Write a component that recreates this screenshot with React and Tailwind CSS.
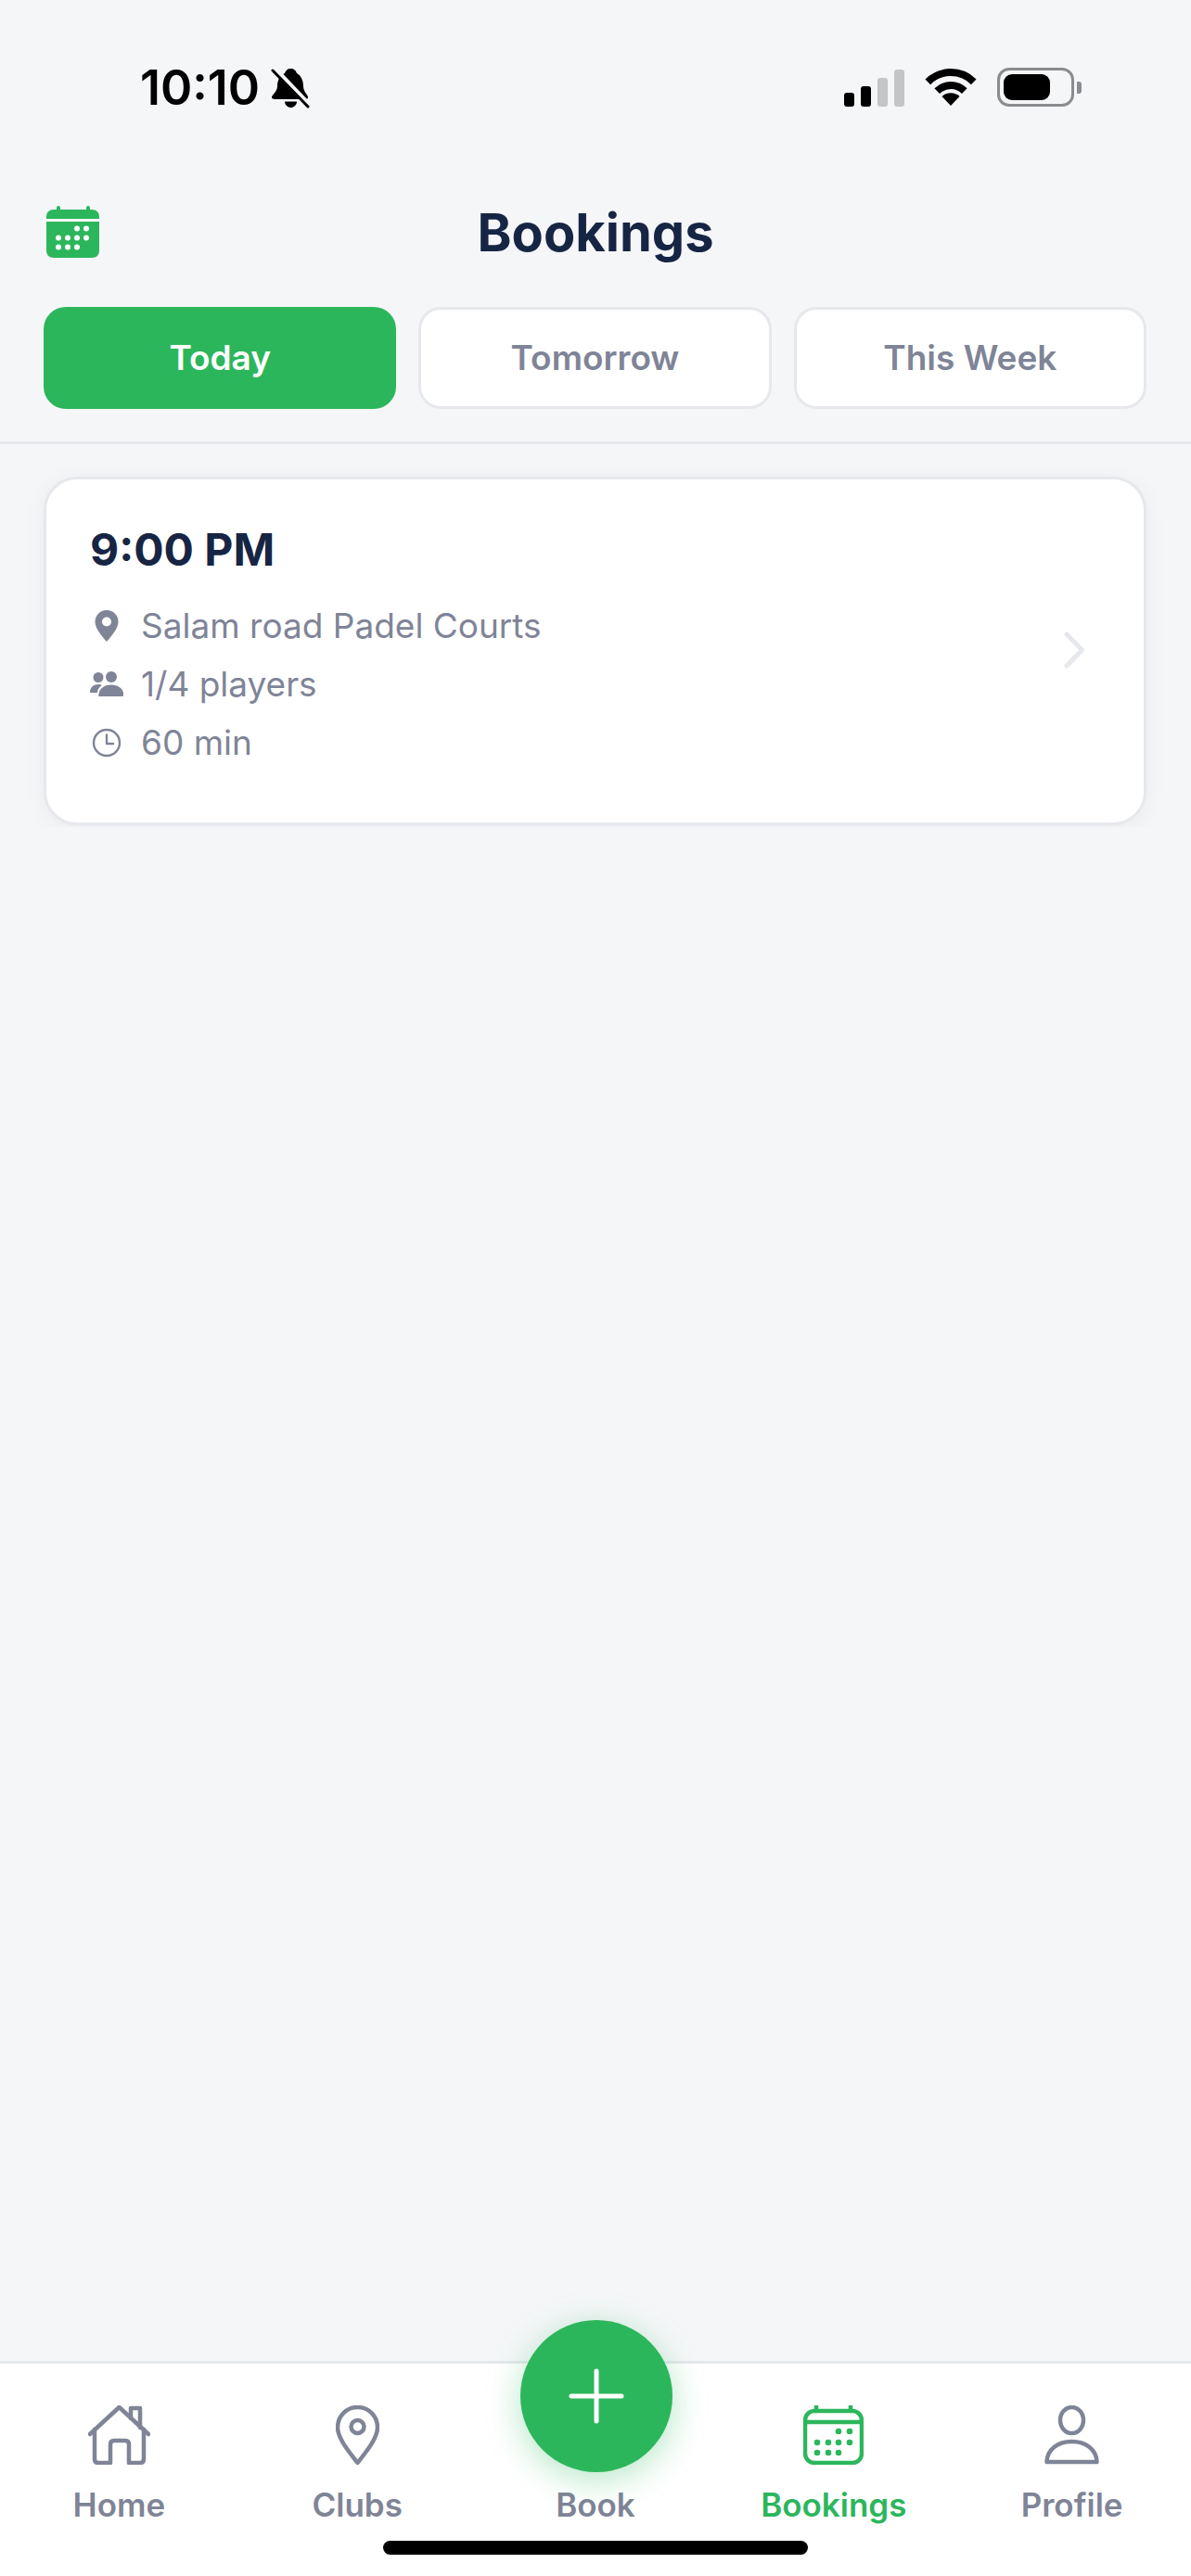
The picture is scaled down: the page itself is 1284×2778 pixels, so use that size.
const GREEN = "#2CB65C";

function BellSlash() {
  return (
    <svg width="42" height="44" viewBox="0 0 42 44" className="ml-[12px]">
      <path fill="#000" d="M21 1C25 1 27 3 28 6C33 9 35 14 35 20C35 26 40 29 40 32C40 34 38 34 37 34H5C2 34 1 33 1 32C1 29 7 26 7 20C7 13 10 8 15 6C16 3 18 1 21 1Z" />
      <path fill="#000" d="M15 36.5H28C28 40 25 43 21.500 43C18 43 15 40 15 36.500Z" />
      <path stroke="#F5F6F8" strokeWidth="4" d="M4 0L42 40" />
      <path stroke="#000" strokeWidth="3" strokeLinecap="round" d="M2 3L40 42" />
    </svg>
  );
}

function Wifi() {
  return (
    <svg width="56" height="41" viewBox="0 0 56 41">
      <g fill="none" stroke="#000" strokeWidth="8">
        <path d="M3.300 14.300A35 35 0 0 1 52.700 14.300" />
        <path d="M13.200 24.200A21 21 0 0 1 42.800 24.200" />
      </g>
      <path fill="#000" d="M28 40L18.500 30A14 14 0 0 1 37.500 30Z" />
    </svg>
  );
}

function CalendarFilled() {
  const dots = [
    [43, 24.500], [33, 24.500],
    [13, 34.500], [23, 34.500], [33, 34.500], [43, 34.500],
    [13, 44.500], [23, 44.500], [33, 44.500],
  ];
  return (
    <svg width="57" height="57" viewBox="0 0 57 57">
      <rect x="11" y="0" width="4" height="7" rx="2" fill={GREEN} />
      <rect x="43" y="0" width="4" height="7" rx="2" fill={GREEN} />
      <path fill={GREEN} d="M0 14V12C0 7 3 4 8 4H49C54 4 57 7 57 12V14Z" />
      <path fill={GREEN} d="M0 17H57V48C57 53 54 56 49 56H8C3 56 0 53 0 48Z" />
      {dots.map(([x, y]) => (
        <circle key={`${x}-${y}`} cx={x} cy={y} r="3" fill="#fff" />
      ))}
    </svg>
  );
}

function PinFilled() {
  return (
    <svg width="26" height="34" viewBox="0 0 26 34">
      <path fill="#7F8497" fillRule="evenodd" d="M13 0C20 0 25.500 5.500 25.500 12.500C25.500 20 18 28 13 34C8 28 0.500 20 0.500 12.500C0.500 5.500 6 0 13 0ZM13 7.500A5 5 0 1 0 13 17.500A5 5 0 1 0 13 7.500Z" />
    </svg>
  );
}

function UsersFilled() {
  return (
    <svg width="36" height="27" viewBox="0 0 36 27">
      <circle cx="9" cy="6.500" r="5.500" fill="#7F8497" />
      <circle cx="23" cy="6" r="6" fill="#7F8497" />
      <path fill="#7F8497" d="M0 23C0 17 4 14 9 14C11 14 12 14.500 13 15C10 17 8 19.500 8 23H1Q0 23 0 23Z" />
      <path fill="#7F8497" d="M10 27C9 27 9 25 10 22.500C11 18 16.500 14.500 23 14.500C29.500 14.500 35 18 36 23C36.500 25.500 36 27 35 27Z" />
    </svg>
  );
}

function Clock() {
  return (
    <svg width="32" height="32" viewBox="0 0 32 32" fill="none" stroke="#7F8497" strokeWidth="2.400">
      <circle cx="16" cy="16" r="14" />
      <path d="M16 7.500V17H23" strokeLinecap="round" strokeLinejoin="round" />
    </svg>
  );
}

function HomeIcon() {
  return (
    <svg width="67" height="64" viewBox="0 0 67 64" fill="none" stroke="#7F8497" strokeWidth="4.500" strokeLinecap="round" strokeLinejoin="round">
      <path d="M2 31L33.500 2L65 31" />
      <path d="M46 14V3H56V24" />
      <path d="M7 26V58Q7 62 11 62H24V42Q24 38 28 38H40Q44 38 44 42V62H56Q60 62 60 58V26" />
    </svg>
  );
}

function ClubsIcon() {
  return (
    <svg width="47" height="64" viewBox="0 0 47 64" fill="none" stroke="#7F8497" strokeWidth="4.500" strokeLinejoin="round">
      <path d="M23.500 2C35 2 45 11 45 24C45 36 31 52 23.500 62C16 52 2 36 2 24C2 11 12 2 23.500 2Z" />
      <circle cx="23.500" cy="23" r="7" />
    </svg>
  );
}

function CalendarOutline() {
  const dots = [
    [38, 28], [50, 28],
    [15, 40], [27, 40], [38, 40], [50, 40],
    [15, 51], [27, 51], [38, 51],
  ];
  return (
    <svg width="65" height="64" viewBox="0 0 65 64" fill="none" stroke={GREEN} strokeWidth="4.500">
      <rect x="2" y="6" width="61" height="56" rx="10" />
      <path d="M2 18H63" />
      <path d="M14 0V6M51 0V6" strokeLinecap="round" />
      {dots.map(([x, y]) => (
        <circle key={`${x}-${y}`} cx={x} cy={y} r="3.300" fill={GREEN} stroke="none" />
      ))}
    </svg>
  );
}

function ProfileIcon() {
  return (
    <svg width="59" height="64" viewBox="0 0 59 64" fill="none" stroke="#7F8497" strokeWidth="4.500" strokeLinejoin="round">
      <ellipse cx="29.500" cy="16" rx="12.500" ry="14" />
      <path d="M2.500 61C3 47 15 39 29.500 39C44 39 56 47 56.500 61Z" />
    </svg>
  );
}

function InfoRow({ icon, text }) {
  return (
    <div className="flex h-[63px] items-center">
      <div className="flex w-[55px] items-center justify-start">
        <div className="flex w-[36px] justify-center">{icon}</div>
      </div>
      <span className="text-[37px] leading-[63px] text-[#7F8497]">{text}</span>
    </div>
  );
}

function Tab({ label, active }) {
  return active ? (
    <button className="flex h-[110px] items-center justify-center rounded-[24px] bg-[#2CB65C] text-[37px] font-semibold text-white">
      {label}
    </button>
  ) : (
    <button className="flex h-[110px] items-center justify-center rounded-[24px] border-[3px] border-[#E6E8EC] bg-white text-[37px] font-semibold text-[#7F8497]">
      {label}
    </button>
  );
}

function NavItem({ icon, label, active }) {
  return (
    <div className="flex flex-1 flex-col items-center">
      <div className="flex h-[64px] items-end justify-center">{icon}</div>
      <span className={`mt-[21px] text-[35px] leading-[44px] font-semibold ${active ? "text-[#2CB65C]" : "text-[#7F8497]"}`}>
        {label}
      </span>
    </div>
  );
}

export default function App() {
  return (
    <div className="relative flex h-[2778px] w-[1284px] flex-col overflow-hidden bg-[#F5F6F8] font-['Inter',sans-serif]">
      <div className="h-[72px] shrink-0" />
      <div className="flex h-[44px] shrink-0 items-center justify-between pl-[151px] pr-[118px]">
        <div className="mt-[2px] flex items-center">
          <span className="text-[52px] leading-[44px] font-semibold text-black">10:10</span>
          <BellSlash />
        </div>
        <div className="flex items-center">
          <div className="flex h-[41px] items-end gap-[7px]">
            <div className="h-[15px] w-[11px] rounded-[3px] bg-black" />
            <div className="h-[22px] w-[11px] rounded-[3px] bg-black" />
            <div className="h-[31px] w-[11px] rounded-[3px] bg-[#C4C5C7]" />
            <div className="h-[40px] w-[11px] rounded-[3px] bg-[#C4C5C7]" />
          </div>
          <div className="ml-[22px]"><Wifi /></div>
          <div className="ml-[22px] flex items-center">
            <div className="flex h-[42px] w-[83px] items-center rounded-[13px] border-[3px] border-[#8C8C90] pl-[4px]">
              <div className="h-[28px] w-[50px] rounded-[9px] bg-black" />
            </div>
            <div className="ml-[3px] h-[13px] w-[5px] rounded-r-[3px] bg-[#8C8C90]" />
          </div>
        </div>
      </div>

      <header className="flex h-[363px] shrink-0 flex-col border-b-[3px] border-[#E6E8EC]">
        <div className="relative mt-[103px] flex h-[64px] shrink-0 items-center justify-center">
          <div className="absolute left-[50px] top-[3px]"><CalendarFilled /></div>
          <h1 className="text-[56px] leading-[64px] font-bold text-[#172544]">Bookings</h1>
        </div>
        <div className="mt-[48px] grid grid-cols-3 gap-[24px] pl-[47px] pr-[48px]">
          <Tab label="Today" active />
          <Tab label="Tomorrow" />
          <Tab label="This Week" />
        </div>
      </header>

      <main className="flex-1 pl-[47px] pr-[48px] pt-[35px]">
        <div className="relative flex h-[376px] flex-col rounded-[36px] border-[3px] border-[#E6E8EC] bg-white pl-[47px] pt-[40px] shadow-[0_4px_24px_rgba(0,0,0,0.05)] [clip-path:inset(-40px_-40px_-2px_-40px)]">
          <div className="text-[48px] leading-[72px] font-bold text-[#172544]">9:00 PM</div>
          <div className="mt-[14px] flex flex-col">
            <InfoRow icon={<PinFilled />} text="Salam road Padel Courts" />
            <InfoRow icon={<UsersFilled />} text="1/4 players" />
            <InfoRow icon={<Clock />} text="60 min" />
          </div>
          <svg className="absolute right-[61px] top-[164px]" width="26" height="40" viewBox="0 0 26 40" fill="none" stroke="#E6E8EC" strokeWidth="5" strokeLinecap="round" strokeLinejoin="round">
            <path d="M4 3L20.500 20L4 37" />
          </svg>
        </div>
      </main>

      <nav className="relative flex h-[232px] shrink-0 border-t-[3px] border-[#E6E8EC] bg-white pt-[45px]">
        <NavItem icon={<HomeIcon />} label="Home" />
        <NavItem icon={<ClubsIcon />} label="Clubs" />
        <NavItem icon={<div className="h-[64px]" />} label="Book" />
        <NavItem icon={<CalendarOutline />} label="Bookings" active />
        <NavItem icon={<ProfileIcon />} label="Profile" />
        <div className="absolute left-[561px] top-[-47px] flex h-[164px] w-[164px] items-center justify-center rounded-full bg-[#2CB65C] shadow-[0_8px_36px_rgba(44,182,92,0.35)]">
          <svg width="60" height="60" viewBox="0 0 60 60" stroke="#fff" strokeWidth="5" strokeLinecap="round">
            <path d="M30 3V57M3 30H57" />
          </svg>
        </div>
        <div className="absolute left-[413px] top-[191px] h-[15px] w-[458px] rounded-full bg-black" />
      </nav>
    </div>
  );
}
